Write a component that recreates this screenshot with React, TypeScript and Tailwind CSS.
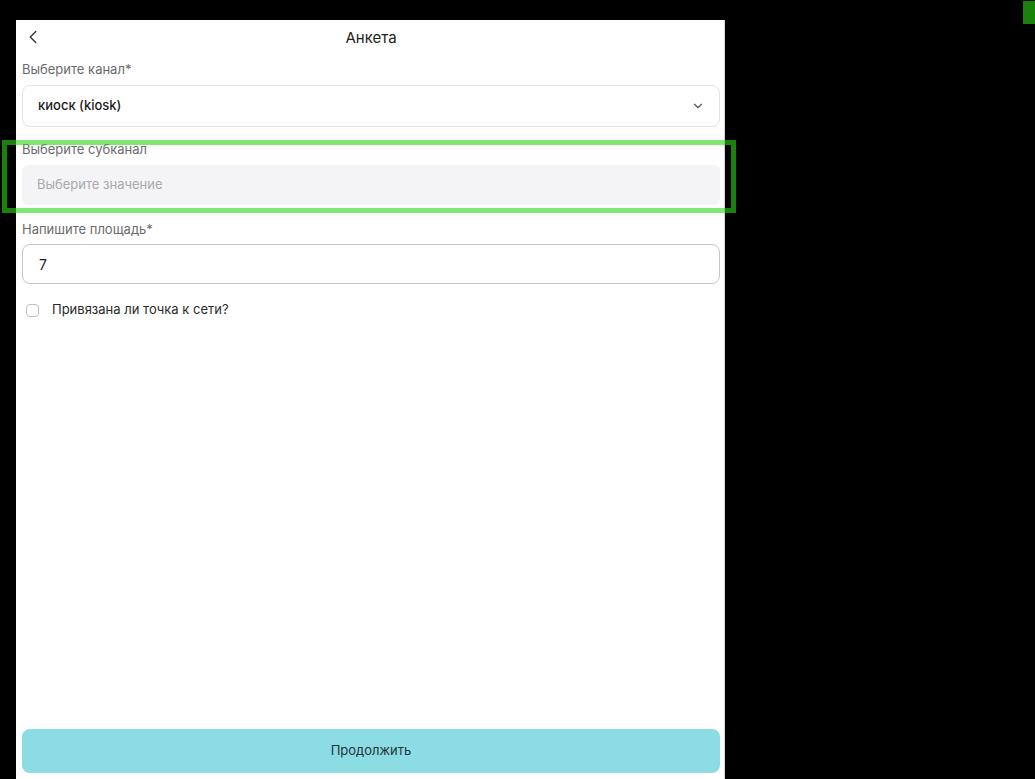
import { ChevronLeft, ChevronDown } from 'lucide-react'

function Label({ children }: { children: React.ReactNode }) {
  return <div className="text-[13px] leading-[18px] text-[#6b6b6b]">{children}</div>
}

export default function App() {
  return (
    <div
      className="relative w-[1035px] h-[779px] bg-black overflow-hidden"
      style={{ fontFamily: 'Inter, "Noto Sans", sans-serif' }}
    >
      {/* corner marker */}
      <div className="absolute right-0 top-[1px] w-[12px] h-[23px] bg-[rgba(43,217,20,0.6)]" />

      <div className="ml-[16px] mt-[20px] w-[709px] h-[759px] bg-white flex flex-col pl-[6px] pr-[4px] border-r border-[#d4d4d4]">
        <div className="relative h-[36px] flex items-center justify-center">
          <ChevronLeft className="absolute left-[0px] top-[6px] w-[22px] h-[22px] text-[#333]" strokeWidth={1.5} />
          <span className="text-[15px] text-[#222]">Анкета</span>
        </div>

        <div className="mt-[4px]">
          <Label>Выберите канал*</Label>
        </div>
        <div className="mt-[7px] h-[42px] rounded-[8px] border border-[#e3e3e3] flex items-center justify-between pl-[15px] pr-[14px]">
          <span className="text-[13px] text-[#1c1c1c] font-medium">киоск (kiosk)</span>
          <ChevronDown className="w-[14px] h-[14px] text-[#555]" strokeWidth={2} />
        </div>

        <div className="mt-[13px]">
          <Label>Выберите субканал</Label>
        </div>
        <div className="mt-[7px] h-[40px] rounded-[6px] bg-[#f4f4f7] flex items-center pl-[15px]">
          <span className="text-[13px] text-[#a9a9ae]">Выберите значение</span>
        </div>

        <div className="mt-[15px]">
          <Label>Напишите площадь*</Label>
        </div>
        <div className="mt-[6px] h-[40px] rounded-[8px] border border-[#c6c6c6] flex items-center pl-[16px]">
          <span className="text-[14px] text-[#1c1c1c]">7</span>
        </div>

        <label className="mt-[16px] h-[20px] flex items-center gap-[13px] pl-[4px]">
          <span className="w-[13px] h-[13px] rounded-[4px] border border-[#bdbdbd] bg-white" />
          <span className="text-[13px] text-[#2a2a2a]">Привязана ли точка к сети?</span>
        </label>

        <div className="flex-1" />

        <button className="mb-[6px] h-[44px] rounded-[8px] bg-[#8cdce3] text-[13px] text-[#1e3438] flex items-center justify-center">
          Продолжить
        </button>
      </div>

      {/* highlight frame */}
      <div className="absolute left-[2px] top-[140px] w-[734px] h-[73px] border-[5px] border-[rgba(43,217,20,0.6)]" />
    </div>
  )
}
